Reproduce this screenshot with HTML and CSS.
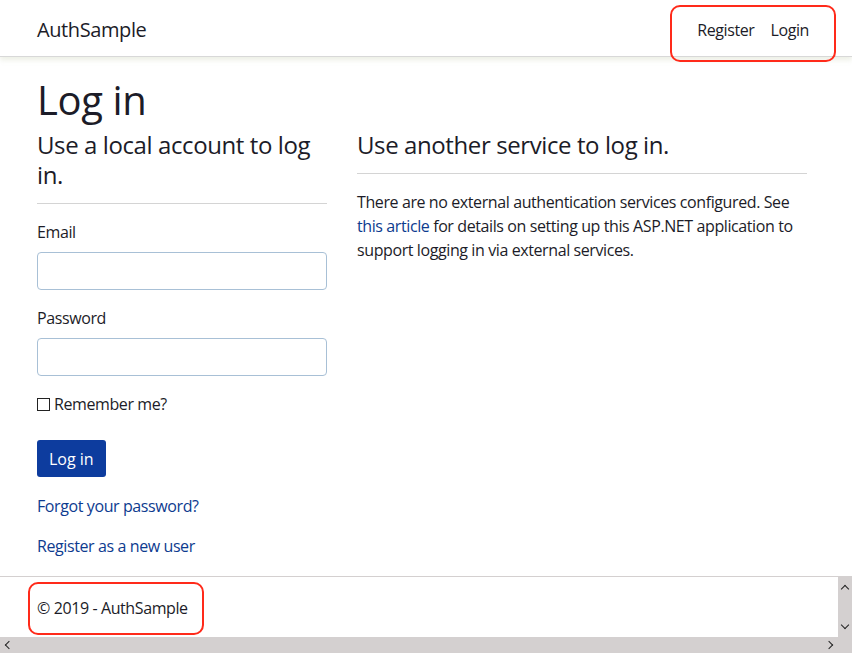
FILE: index.html
```html
<!DOCTYPE html>
<html lang="en">
<head>
<meta charset="utf-8">
<title>Log in - AuthSample</title>
<link rel="stylesheet" href="styles.css">
</head>
<body>
<header class="site-header">
  <nav class="navbar">
    <a class="brand" href="#">AuthSample</a>
    <ul class="nav-links">
      <li><a href="#">Register</a></li>
      <li><a href="#">Login</a></li>
    </ul>
  </nav>
</header>
<main class="container">
  <h1 class="page-title">Log in</h1>
  <div class="row">
    <section class="col-local">
      <h4 class="section-title">Use a local account to log in.</h4>
      <hr class="rule">
      <form class="login-form">
        <div class="form-group">
          <label class="field-label" for="email">Email</label>
          <input class="form-control" id="email" type="email">
        </div>
        <div class="form-group">
          <label class="field-label" for="password">Password</label>
          <input class="form-control" id="password" type="password">
        </div>
        <div class="form-check">
          <span class="check-box"></span>
          <span class="check-label">Remember me?</span>
        </div>
        <div class="form-actions">
          <button class="btn-primary" type="button">Log in</button>
        </div>
        <p class="form-link"><a href="#">Forgot your password?</a></p>
        <p class="form-link"><a href="#">Register as a new user</a></p>
      </form>
    </section>
    <section class="col-external">
      <h4 class="section-title">Use another service to log in.</h4>
      <hr class="rule">
      <p class="info">There are no external authentication services configured. See <a href="#">this article</a> for details on setting up this ASP.NET application to support logging in via external services.</p>
    </section>
  </div>
</main>
<footer class="footer">
  <div class="footer-body">
    <div class="footer-text">&copy; 2019 - AuthSample</div>
    <div class="vscroll">
      <span class="arrow up"></span>
      <span class="arrow down"></span>
    </div>
  </div>
  <div class="hscroll">
    <span class="arrow left"></span>
    <span class="arrow right"></span>
  </div>
</footer>
<div class="mark mark-nav"></div>
<div class="mark mark-footer"></div>
</body>
</html>
```
FILE: styles.css
```css
* { box-sizing: border-box; }
html, body { margin: 0; padding: 0; }
body {
  font-family: "Open Sans", "Noto Sans", sans-serif;
  font-size: 16px;
  line-height: 1.5;
  letter-spacing: -0.025em;
  color: #1c1c28;
  background: #fff;
  height: 653px;
  display: flex;
  flex-direction: column;
  overflow: hidden;
  position: relative;
}
a { color: #0d3b8f; text-decoration: none; }

.site-header {
  border-bottom: 1px solid #d8d8d8;
  box-shadow: 0 3px 5px rgba(180, 190, 150, 0.25);
}
.navbar {
  height: 56px;
  display: flex;
  align-items: center;
  justify-content: space-between;
  padding: 3px 35px 0 37px;
}
.brand { font-size: 20px; color: #1c1c28; }
.nav-links { list-style: none; margin: 0; padding: 0; display: flex; }
.nav-links a { display: block; padding: 0 8px; color: #1c1c28; }

.container { flex: 1; min-height: 0; padding: 0 45px 0 37px; }
.page-title {
  font-size: 40px;
  font-weight: 400;
  line-height: 1.2;
  margin: 19px 0 6px;
}
.row { display: flex; gap: 30px; }
.col-local { width: 290px; }
.col-external { width: 450px; }
.section-title {
  font-size: 24px;
  font-weight: 400;
  line-height: 1.25;
  margin: 0;
}
.rule { border: 0; border-top: 1px solid #d4d4d4; margin: 13px 0 16px; }
.form-group { margin-bottom: 16px; }
.field-label { display: block; margin-bottom: 8px; }
.form-control {
  display: block;
  width: 100%;
  height: 38px;
  border: 1px solid #a8c0d6;
  border-radius: 4px;
  padding: 6px 12px;
  font: inherit;
}
.form-check { display: flex; align-items: center; gap: 4px; margin-bottom: 24px; }
.check-box { width: 13px; height: 13px; border: 1px solid #222; }
.form-actions { margin: 0 0 17px; }
.btn-primary {
  background: #0d3c9e;
  color: #fff;
  border: 0;
  border-radius: 3px;
  padding: 6px 12px;
  font: inherit;
  line-height: 1.5;
  height: 37px;
}
.form-link { margin: 0 0 16px; }
.info { margin: 0; }

.footer { border-top: 1px solid #d4d0d0; flex-shrink: 0; }
.footer-body { display: flex; height: 60px; }
.footer-text { flex: 1; padding-left: 37px; line-height: 62px; white-space: nowrap; }
.vscroll {
  width: 14px;
  background: #d4d0d0;
  display: flex;
  flex-direction: column;
  justify-content: space-between;
  align-items: center;
  padding: 6px 0;
}
.hscroll {
  height: 16px;
  background: #d4d0d0;
  display: flex;
  justify-content: space-between;
  align-items: center;
  padding: 0 20px 0 6px;
}
.arrow { width: 6px; height: 6px; border: solid #222; border-width: 1px 0 0 1px; }
.arrow.up { transform: rotate(45deg); margin-top: 3px; }
.arrow.down { transform: rotate(225deg); margin-bottom: 3px; }
.arrow.left { transform: rotate(-45deg); }
.arrow.right { transform: rotate(135deg); }

.mark {
  position: absolute;
  border: 2px solid #ff2a1a;
  border-radius: 10px;
}
.mark-nav { left: 670px; top: 5px; width: 166px; height: 57px; }
.mark-footer { left: 28px; top: 582px; width: 176px; height: 53px; }
```
